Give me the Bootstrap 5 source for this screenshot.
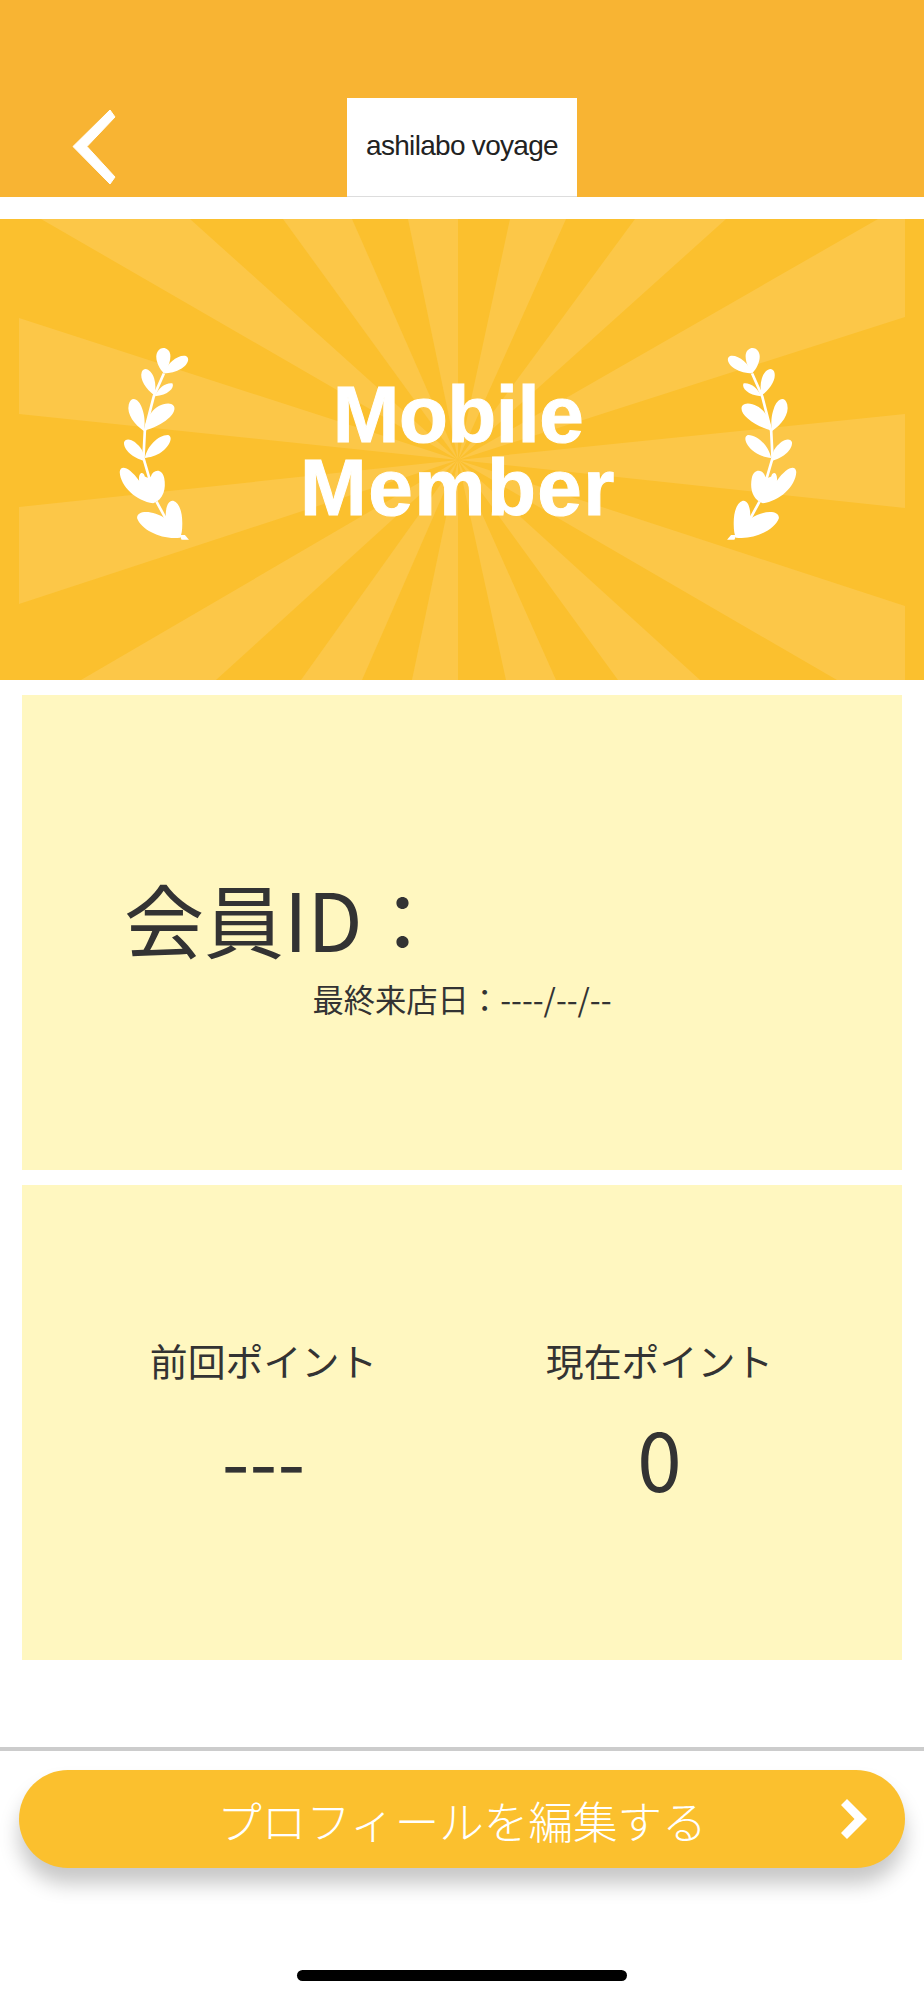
<!DOCTYPE html>
<html lang="ja">
<head>
  <meta charset="UTF-8">
  <title>Mobile Member</title>
  <link href="https://cdn.jsdelivr.net/npm/bootstrap@5.3.3/dist/css/bootstrap.min.css" rel="stylesheet">
  <style>
    body { background: #fff; color: #333; font-family: "Noto Sans CJK JP", "Noto Sans", sans-serif; }
    .top-bar { height: 197px; background: #f8b433; display: grid; grid-template-columns: 1fr 230px 1fr; }
    .back-link { display: block; width: 44px; height: 76px; margin: 109px 0 0 72px; }
    .logo-box { margin-top: 98px; height: 99px; padding-bottom: 3px; background: #fff; border-bottom: 1px solid #ddd; font-family: "Liberation Sans", sans-serif; font-size: 28px; letter-spacing: -.7px; color: #222; }
    .member-banner { height: 461px; margin-top: 22px; background: #fbc02e; position: relative; }
    .member-banner .rays { position: absolute; inset: 0; }
    .banner-inner { position: relative; height: 100%; display: grid; grid-template-columns: 258px 400px 1fr; padding-top: 128px; }
    .laurel { width: 71px; height: 194px; }
    .laurel-left { justify-self: end; margin-right: 68px; }
    .laurel-right { margin-left: 68px; transform: scaleX(-1); }
    .member-title { font-family: "Liberation Sans", sans-serif; font-weight: 700; font-size: 80px; line-height: 73px; color: #fff; text-align: center; -webkit-text-stroke: 1px #fff; margin: 31px 0 0; }
    .member-title span { display: block; letter-spacing: -.5px; }
    .member-title span + span { letter-spacing: 1.5px; }
    .info-box { height: 475px; margin: 15px 22px 0; background: #fff7c0; }
    .member-id { font-size: 80px; line-height: 90px; padding: 177px 0 0 102px; margin: 0; }
    .last-visit { font-size: 31.3px; line-height: 40px; margin: 17px 0 0; text-align: center; }
    .point-cols { display: flex; justify-content: center; gap: 168px; padding: 148px 1px 0 0; }
    .point-col { width: 228px; text-align: center; }
    .point-label { font-size: 37.9px; line-height: 54px; }
    .point-value { font-size: 80px; line-height: 110px; margin-top: 15px; }
    .foot-line { height: 4px; margin-top: 87px; background: #ccc; }
    .edit-btn { display: grid; grid-template-columns: 1fr auto 1fr; align-items: center; width: 886px; height: 98px; margin: 19px 0 0 19px; padding: 0 38px; background: #fbc02e; border: 0; color: #fff; font-size: 44.6px; font-weight: 300; box-shadow: 0 16px 20px rgba(0,0,0,.22); }
    .edit-btn:hover, .edit-btn:active { background: #fbc02e !important; color: #fff !important; }
    .edit-btn .btn-label { padding-top: 3px; }
    .edit-btn svg { justify-self: end; }
    .home-bar { width: 330px; height: 11px; margin: 102px auto 18px; background: #000; border-radius: 6px; }
  </style>
</head>
<body>
  <header class="top-bar">
    <a href="#" class="back-link" aria-label="back">
      <svg width="44" height="76" viewBox="0 0 44 76"><polygon points="38,1 43,8 15,37.5 43,68 38,75 1,37.5" fill="#fff" stroke="#fff" stroke-width="1" stroke-linejoin="round"/></svg>
    </a>
    <div class="logo-box d-flex align-items-center justify-content-center">ashilabo voyage</div>
  </header>

  <section class="member-banner">
    <svg class="rays" width="924" height="461" viewBox="0 219 924 461">
      <g fill="#fcc748">
        <polygon points="458,460 41,219 190,219"/>
        <polygon points="458,460 283,219 352,219"/>
        <polygon points="458,460 408,219 458,219"/>
        <polygon points="458,460 510,219 566,219"/>
        <polygon points="458,460 635,219 726,219"/>
        <polygon points="458,460 878,219 905,219 905,317"/>
        <polygon points="458,460 905,414 905,508"/>
        <polygon points="458,460 905,606 905,680 837,680"/>
        <polygon points="458,460 700,680 618,680"/>
        <polygon points="458,460 556,680 506,680"/>
        <polygon points="458,460 458,680 412,680"/>
        <polygon points="458,460 362,680 301,680"/>
        <polygon points="458,460 216,680 81,680"/>
        <polygon points="458,460 19,604 19,507"/>
        <polygon points="458,460 19,414 19,318"/>
      </g>
    </svg>
    <div class="banner-inner">
      <svg class="laurel laurel-left" viewBox="88 78 212 580"><use href="#laurelShape"/></svg>
      <h1 class="member-title"><span>Mobile</span><span>Member</span></h1>
      <svg class="laurel laurel-right" viewBox="88 78 212 580">
        <g id="laurelShape" fill="#fff">
          <path d="M222 157 C205 140 193 110 203 92 C215 74 237 80 241 100 C244 120 232 145 222 157Z"/>
          <path d="M222 157 C232 125 265 100 288 105 C302 112 292 132 275 142 C258 152 240 156 222 157Z"/>
          <path d="M193 222 C170 205 148 175 156 152 C165 133 187 150 193 172 C198 190 198 205 193 222Z"/>
          <path d="M195 225 C205 200 230 183 248 187 C254 200 235 222 195 225Z"/>
          <path d="M163 330 C135 310 110 280 117 250 C125 220 149 235 157 262 C165 285 166 305 163 330Z"/>
          <path d="M165 328 C165 290 195 248 235 247 C262 248 258 274 235 292 C215 310 190 320 165 328Z"/>
          <path d="M163 418 C130 410 100 385 103 362 C112 343 142 362 156 385 C161 395 162 405 163 418Z"/>
          <path d="M165 410 C172 375 205 340 235 341 C252 348 237 377 215 392 C198 404 180 408 165 410Z"/>
          <path d="M190 545 C140 540 92 495 90 452 C92 428 120 438 148 478 C145 453 160 448 165 465 C175 470 180 470 183 465 C190 443 217 440 223 470 C229 500 222 535 190 545Z"/>
          <path d="M270 648 C215 655 155 625 142 590 C140 565 190 565 228 592 C225 560 235 535 250 538 C270 545 278 575 277 610 C277 625 275 640 270 648Z"/>
          <path d="M268 640 L285 640 L297 654 L275 654Z"/>
          <path d="M222 157 L192 225 L165 330 L161 410 L180 475 M200 540 L228 592" fill="none" stroke="#fff" stroke-width="8"/>
        </g>
      </svg>
    </div>
  </section>

  <section class="info-box">
    <p class="member-id">会員ID：</p>
    <p class="last-visit">最終来店日：----/--/--</p>
  </section>

  <section class="info-box">
    <div class="point-cols">
      <div class="point-col">
        <div class="point-label">前回ポイント</div>
        <div class="point-value">---</div>
      </div>
      <div class="point-col">
        <div class="point-label">現在ポイント</div>
        <div class="point-value">0</div>
      </div>
    </div>
  </section>

  <div class="foot-line"></div>
  <button type="button" class="btn rounded-pill edit-btn">
    <span></span>
    <span class="btn-label">プロフィールを編集する</span>
    <svg width="26" height="40" viewBox="0 0 26 40"><polygon points="0,6 6,0 26,20 6,40 0,34 13.5,20" fill="#fff"/></svg>
  </button>
  <div class="home-bar"></div>

  <script src="https://cdn.jsdelivr.net/npm/bootstrap@5.3.3/dist/js/bootstrap.bundle.min.js"></script>
</body>
</html>
